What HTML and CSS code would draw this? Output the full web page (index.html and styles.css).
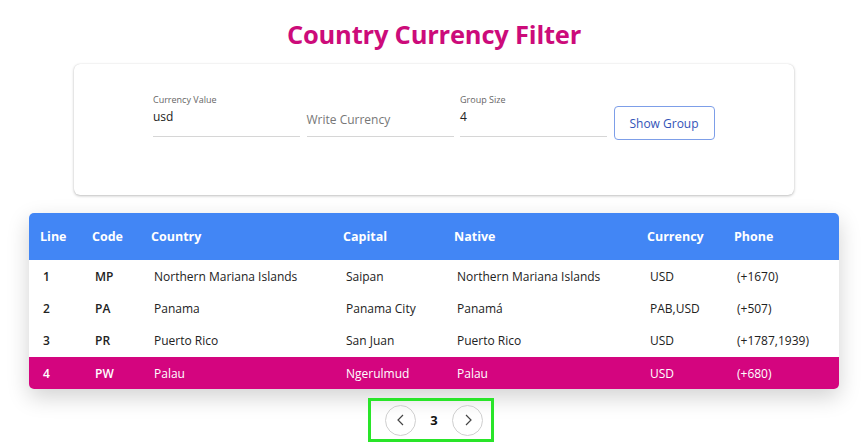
FILE: index.html
```html
<!DOCTYPE html>
<html lang="en">
<head>
<meta charset="utf-8">
<title>Country Currency Filter</title>
<link rel="stylesheet" href="styles.css">
</head>
<body>
<div class="page">
  <h1 class="title">Country Currency Filter</h1>
  <section class="card">
    <div class="form-row">
      <label class="field">
        <span class="field-label">Currency Value</span>
        <span class="field-value">usd</span>
      </label>
      <label class="field">
        <span class="field-label"></span>
        <span class="field-value placeholder">Write Currency</span>
      </label>
      <label class="field">
        <span class="field-label">Group Size</span>
        <span class="field-value">4</span>
      </label>
      <button class="btn">Show Group</button>
    </div>
  </section>
  <div class="table-wrap">
    <table class="data">
      <colgroup>
        <col style="width:52px"><col style="width:59px"><col style="width:192px"><col style="width:111px"><col style="width:193px"><col style="width:87px"><col style="width:116px">
      </colgroup>
      <thead>
        <tr><th>Line</th><th>Code</th><th>Country</th><th>Capital</th><th>Native</th><th>Currency</th><th>Phone</th></tr>
      </thead>
      <tbody>
        <tr><td class="b">1</td><td class="b">MP</td><td>Northern Mariana Islands</td><td>Saipan</td><td>Northern Mariana Islands</td><td>USD</td><td>(+1670)</td></tr>
        <tr><td class="b">2</td><td class="b">PA</td><td>Panama</td><td>Panama City</td><td>Panamá</td><td>PAB,USD</td><td>(+507)</td></tr>
        <tr><td class="b">3</td><td class="b">PR</td><td>Puerto Rico</td><td>San Juan</td><td>Puerto Rico</td><td>USD</td><td>(+1787,1939)</td></tr>
        <tr class="active"><td class="b">4</td><td class="b">PW</td><td>Palau</td><td>Ngerulmud</td><td>Palau</td><td>USD</td><td>(+680)</td></tr>
      </tbody>
    </table>
  </div>
  <nav class="pager">
    <button class="circle" aria-label="previous">
      <svg width="14" height="14" viewBox="0 0 14 14"><path d="M9 2 L4 7 L9 12" fill="none" stroke="#444" stroke-width="1.2"/></svg>
    </button>
    <span class="page-num">3</span>
    <button class="circle" aria-label="next">
      <svg width="14" height="14" viewBox="0 0 14 14"><path d="M5 2 L10 7 L5 12" fill="none" stroke="#444" stroke-width="1.2"/></svg>
    </button>
  </nav>
</div>
</body>
</html>
```
FILE: styles.css
```css
* { box-sizing: border-box; }
html, body { margin: 0; padding: 0; background: #fff; }
body { font-family: "Open Sans", "Noto Sans", sans-serif; color: #222; }
.page { width: 810px; margin-left: 29px; display: flex; flex-direction: column; align-items: center; }
.title {
  margin: 16px 0 0;
  height: 36px;
  font-size: 25.5px;
  font-weight: 700;
  color: #cc0b7a;
  line-height: 36px;
  letter-spacing: -0.2px;
}
.card {
  margin-top: 12px;
  width: 720px;
  height: 131px;
  background: #fff;
  border-radius: 6px;
  box-shadow: 0 1px 3px rgba(0,0,0,0.25), 0 0 1px rgba(0,0,0,0.15);
  padding: 29px 0 0 79px;
}
.form-row { display: flex; align-items: flex-start; gap: 6.5px; }
.field {
  width: 147px;
  height: 44px;
  border-bottom: 1px solid #d6d6d6;
  display: flex;
  flex-direction: column;
}
.field-label { font-size: 9px; color: #666; height: 14px; line-height: 14px; }
.field-value { font-size: 12px; color: #222; line-height: 20px; }
.field-value.placeholder { color: #777; margin-top: 3px; }
.btn {
  margin-top: 13px;
  width: 101px;
  height: 34px;
  background: #fff;
  border: 1px solid #7d9ee8;
  border-radius: 4px;
  color: #3354b8;
  font-family: inherit;
  font-size: 12px;
  padding: 0;
}
.table-wrap {
  margin-top: 18px;
  width: 810px;
  border-radius: 5px;
  overflow: hidden;
  box-shadow: 0 8px 22px rgba(0,0,0,0.18);
}
.data { width: 810px; border-collapse: collapse; table-layout: fixed; font-size: 12px; }
.data th {
  background: #4286f5;
  color: #fff;
  font-weight: 700;
  text-align: left;
  height: 47px;
  padding: 0 0 0 11px;
  font-size: 12.5px;
}
.data td { height: 32.3px; padding: 0 0 0 14px; white-space: nowrap; color: #222; }
.data td.b { font-weight: 600; }
.data tr.active td { background: #d4057f; color: #fff; }
.pager {
  margin-top: 9px;
  margin-right: 6px;
  width: 126px;
  height: 44px;
  border: 3px solid #29e529;
  display: flex;
  align-items: center;
  justify-content: space-between;
  padding: 0 8px 0 14px;
}
.circle {
  width: 31px;
  height: 31px;
  border-radius: 50%;
  border: 1px solid #cfcfcf;
  background: transparent;
  padding: 0;
  display: flex;
  align-items: center;
  justify-content: center;
}
.page-num { font-weight: 700; font-size: 13px; color: #111; }
```
